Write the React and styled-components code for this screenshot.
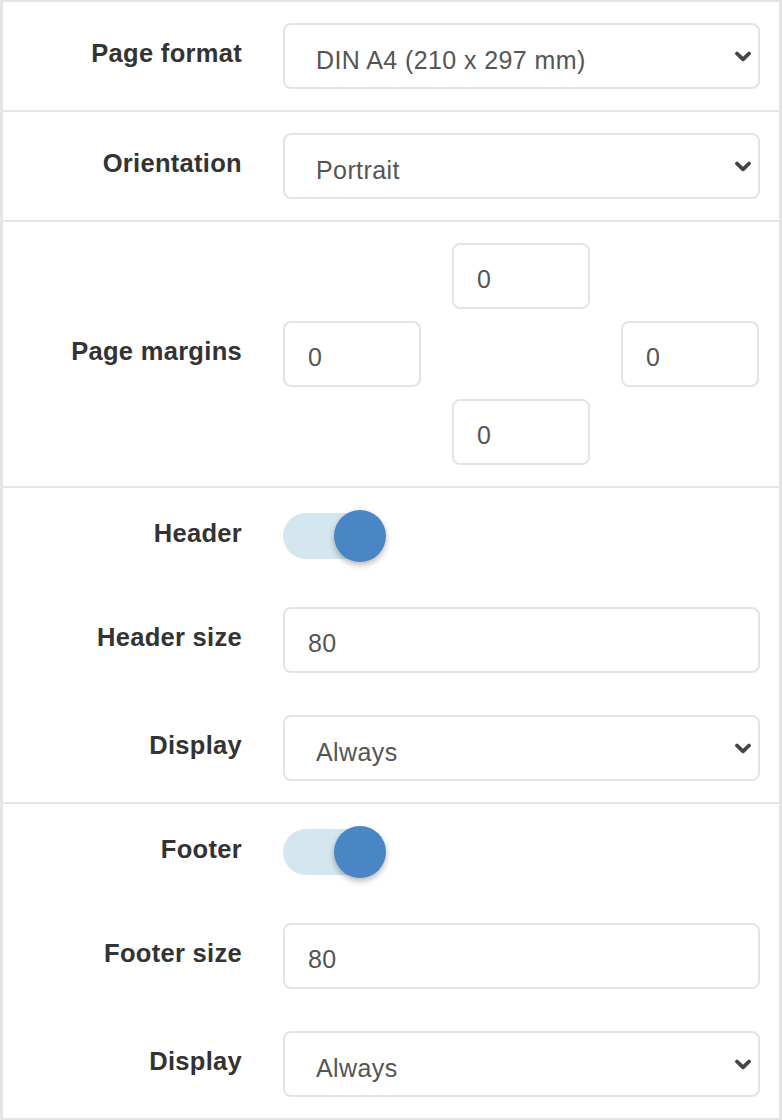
import React from "react";
import styled, { createGlobalStyle } from "styled-components";

const GlobalStyle = createGlobalStyle`
  html, body {
    margin: 0;
    padding: 0;
    background: #e3e6e9;
  }
  * {
    box-sizing: border-box;
  }
`;

const Panel = styled.div`
  margin: 2px 3px 3px 3px;
  background: #ffffff;
  font-family: "Liberation Sans", Arial, sans-serif;
`;

const Section = styled.div`
  display: flex;
  flex-direction: column;
  gap: ${(p) => p.gap || 0}px;
  padding: 21px 19px 21px 0;
  border-bottom: 2px solid #e6e6e6;
  &:last-child {
    border-bottom: none;
  }
`;

const Row = styled.div`
  display: grid;
  grid-template-columns: 238px 1fr;
  column-gap: 42px;
  align-items: center;
  min-height: ${(p) => p.h || 66}px;
`;

const Label = styled.label`
  text-align: right;
  font-weight: 700;
  font-size: 25.5px;
  letter-spacing: 0.3px;
  color: #333333;
  padding-bottom: 5px;
  margin-right: -1px;
`;

const Field = styled.input`
  display: block;
  width: 100%;
  height: 66px;
  border: 2px solid #e4e4e4;
  border-radius: 8px;
  padding: 6px 0 0 23px;
  font-family: "Liberation Sans", Arial, sans-serif;
  font-size: 25px;
  letter-spacing: 0.4px;
  color: #555555;
  background: #ffffff;
  outline: none;
`;

const SelectWrap = styled.div`
  position: relative;
  height: 66px;
`;

const Select = styled.select`
  appearance: none;
  -webkit-appearance: none;
  width: 100%;
  height: 66px;
  border: 2px solid #e4e4e4;
  border-radius: 8px;
  padding: 8px 40px 0 31px;
  font-family: "Liberation Sans", Arial, sans-serif;
  font-size: 25px;
  letter-spacing: 0.4px;
  color: #555555;
  background: #ffffff;
  outline: none;
`;

const Chevron = styled.svg`
  position: absolute;
  right: 8px;
  top: 28px;
  width: 18px;
  height: 11px;
  pointer-events: none;
`;

const MarginGrid = styled.div`
  display: grid;
  width: 476px;
  grid-template-columns: repeat(3, 138px);
  grid-template-rows: repeat(3, 66px);
  justify-content: space-between;
  row-gap: 12px;
  grid-template-areas:
    ". top ."
    "left . right"
    ". bottom .";
`;

const MarginCell = styled.div`
  grid-area: ${(p) => p.area};
`;

const Track = styled.div`
  position: relative;
  width: 96px;
  height: 46px;
  border-radius: 23px;
  background: ${(p) => (p.on ? "#d4e7f0" : "#e6e6e6")};
`;

const Knob = styled.div`
  position: absolute;
  top: -3px;
  left: ${(p) => (p.on ? 51 : -3)}px;
  width: 52px;
  height: 52px;
  border-radius: 50%;
  background: ${(p) => (p.on ? "#4a86c5" : "#ffffff")};
  box-shadow: 0 3px 6px rgba(0, 0, 0, 0.28);
`;

const ChevronIcon = () => (
  <Chevron viewBox="0 0 18 11">
    <path
      d="M3 2.5 L9 8.3 L15 2.5"
      fill="none"
      stroke="#444"
      strokeWidth="3.8"
      strokeLinecap="round"
      strokeLinejoin="round"
    />
  </Chevron>
);

const SelectField = ({ value, options }) => (
  <SelectWrap>
    <Select defaultValue={value}>
      {options.map((o) => (
        <option key={o}>{o}</option>
      ))}
    </Select>
    <ChevronIcon />
  </SelectWrap>
);

const Toggle = ({ on }) => (
  <Track on={on ? 1 : 0}>
    <Knob on={on ? 1 : 0} />
  </Track>
);

const displayOptions = ["Always", "First page only", "Never"];

export default function App() {
  return (
    <>
      <GlobalStyle />
      <Panel>
        <Section>
          <Row>
            <Label>Page format</Label>
            <SelectField
              value="DIN A4 (210 x 297 mm)"
              options={["DIN A4 (210 x 297 mm)", "DIN A5 (148 x 210 mm)", "Letter"]}
            />
          </Row>
        </Section>

        <Section>
          <Row>
            <Label>Orientation</Label>
            <SelectField value="Portrait" options={["Portrait", "Landscape"]} />
          </Row>
        </Section>

        <Section>
          <Row>
            <Label>Page margins</Label>
            <MarginGrid>
              <MarginCell area="top">
                <Field defaultValue="0" />
              </MarginCell>
              <MarginCell area="left">
                <Field defaultValue="0" />
              </MarginCell>
              <MarginCell area="right">
                <Field defaultValue="0" />
              </MarginCell>
              <MarginCell area="bottom">
                <Field defaultValue="0" />
              </MarginCell>
            </MarginGrid>
          </Row>
        </Section>

        <Section gap={44}>
          <Row h={54}>
            <Label>Header</Label>
            <Toggle on />
          </Row>
          <Row>
            <Label>Header size</Label>
            <Field defaultValue="80" />
          </Row>
          <Row style={{ marginTop: -2 }}>
            <Label>Display</Label>
            <SelectField value="Always" options={displayOptions} />
          </Row>
        </Section>

        <Section gap={44}>
          <Row h={54}>
            <Label>Footer</Label>
            <Toggle on />
          </Row>
          <Row>
            <Label>Footer size</Label>
            <Field defaultValue="80" />
          </Row>
          <Row style={{ marginTop: -2 }}>
            <Label>Display</Label>
            <SelectField value="Always" options={displayOptions} />
          </Row>
        </Section>
      </Panel>
    </>
  );
}
